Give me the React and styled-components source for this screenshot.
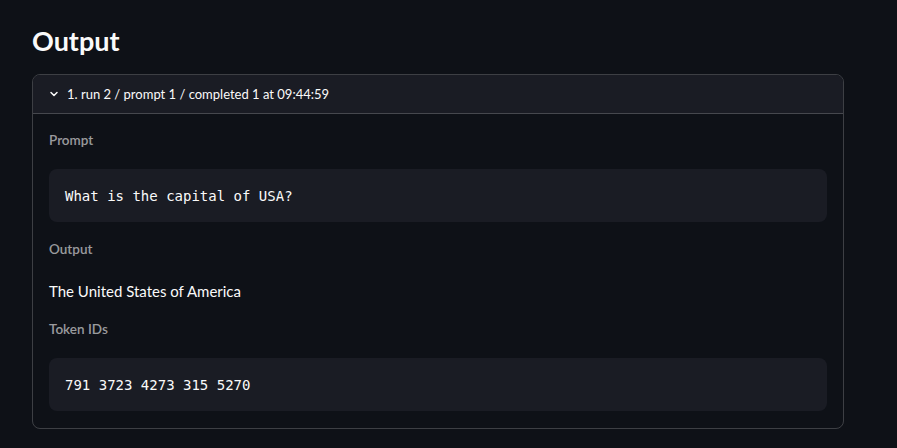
import React from 'react';
import styled, { createGlobalStyle } from 'styled-components';

const Global = createGlobalStyle`
  html, body {
    margin: 0;
    padding: 0;
    background: #0e1117;
    color: #fafafa;
    font-family: "Lato", "Noto Sans", sans-serif;
  }
`;

const Page = styled.div`
  padding: 24px 53px 20px 32px;
  display: flex;
  flex-direction: column;
`;

const Title = styled.h1`
  margin: 0 0 16px 0;
  font-size: 27px;
  font-weight: 700;
  line-height: 34px;
  color: #fafafa;
`;

const Expander = styled.div`
  border: 1px solid rgba(250, 250, 250, 0.2);
  border-radius: 8px;
  overflow: hidden;
`;

const Header = styled.div`
  display: flex;
  align-items: center;
  gap: 7px;
  height: 38px;
  padding: 0 15px;
  background: #1a1c24;
  border-bottom: 1px solid rgba(250, 250, 250, 0.2);
  font-size: 13px;
  color: #fafafa;
`;

const Body = styled.div`
  padding: 17px 16px 17px 16px;
  display: flex;
  flex-direction: column;
`;

const Label = styled.div`
  font-size: 13.5px;
  font-weight: 600;
  color: rgba(250, 250, 250, 0.6);
  line-height: 18px;
  margin-bottom: ${p => p.$gap}px;
`;

const Code = styled.pre`
  margin: 0 0 ${p => p.$after}px 0;
  background: #1a1c24;
  border-radius: 8px;
  padding: 0 16px;
  height: 53px;
  display: flex;
  align-items: center;
  font-family: "DejaVu Sans Mono", "Liberation Mono", monospace;
  font-size: 14px;
  color: #fafafa;
`;

const Text = styled.p`
  margin: 0 0 17px 0;
  font-size: 15px;
  line-height: 24px;
  color: #fafafa;
`;

const Chevron = () => (
  <svg width="12" height="12" viewBox="0 0 24 24" fill="none" stroke="#fafafa" strokeWidth="3" strokeLinecap="round" strokeLinejoin="round">
    <polyline points="6 9 12 15 18 9" />
  </svg>
);

export default function App() {
  return (
    <>
      <Global />
      <Page>
        <Title>Output</Title>
        <Expander>
          <Header>
            <Chevron />
            <span>1. run 2 / prompt 1 / completed 1 at 09:44:59</span>
          </Header>
          <Body>
            <Label $gap={20}>Prompt</Label>
            <Code $after={18}>What is the capital of USA?</Code>
            <Label $gap={21}>Output</Label>
            <Text>The United States of America</Text>
            <Label $gap={20}>Token IDs</Label>
            <Code $after={0}>791 3723 4273 315 5270</Code>
          </Body>
        </Expander>
      </Page>
    </>
  );
}
